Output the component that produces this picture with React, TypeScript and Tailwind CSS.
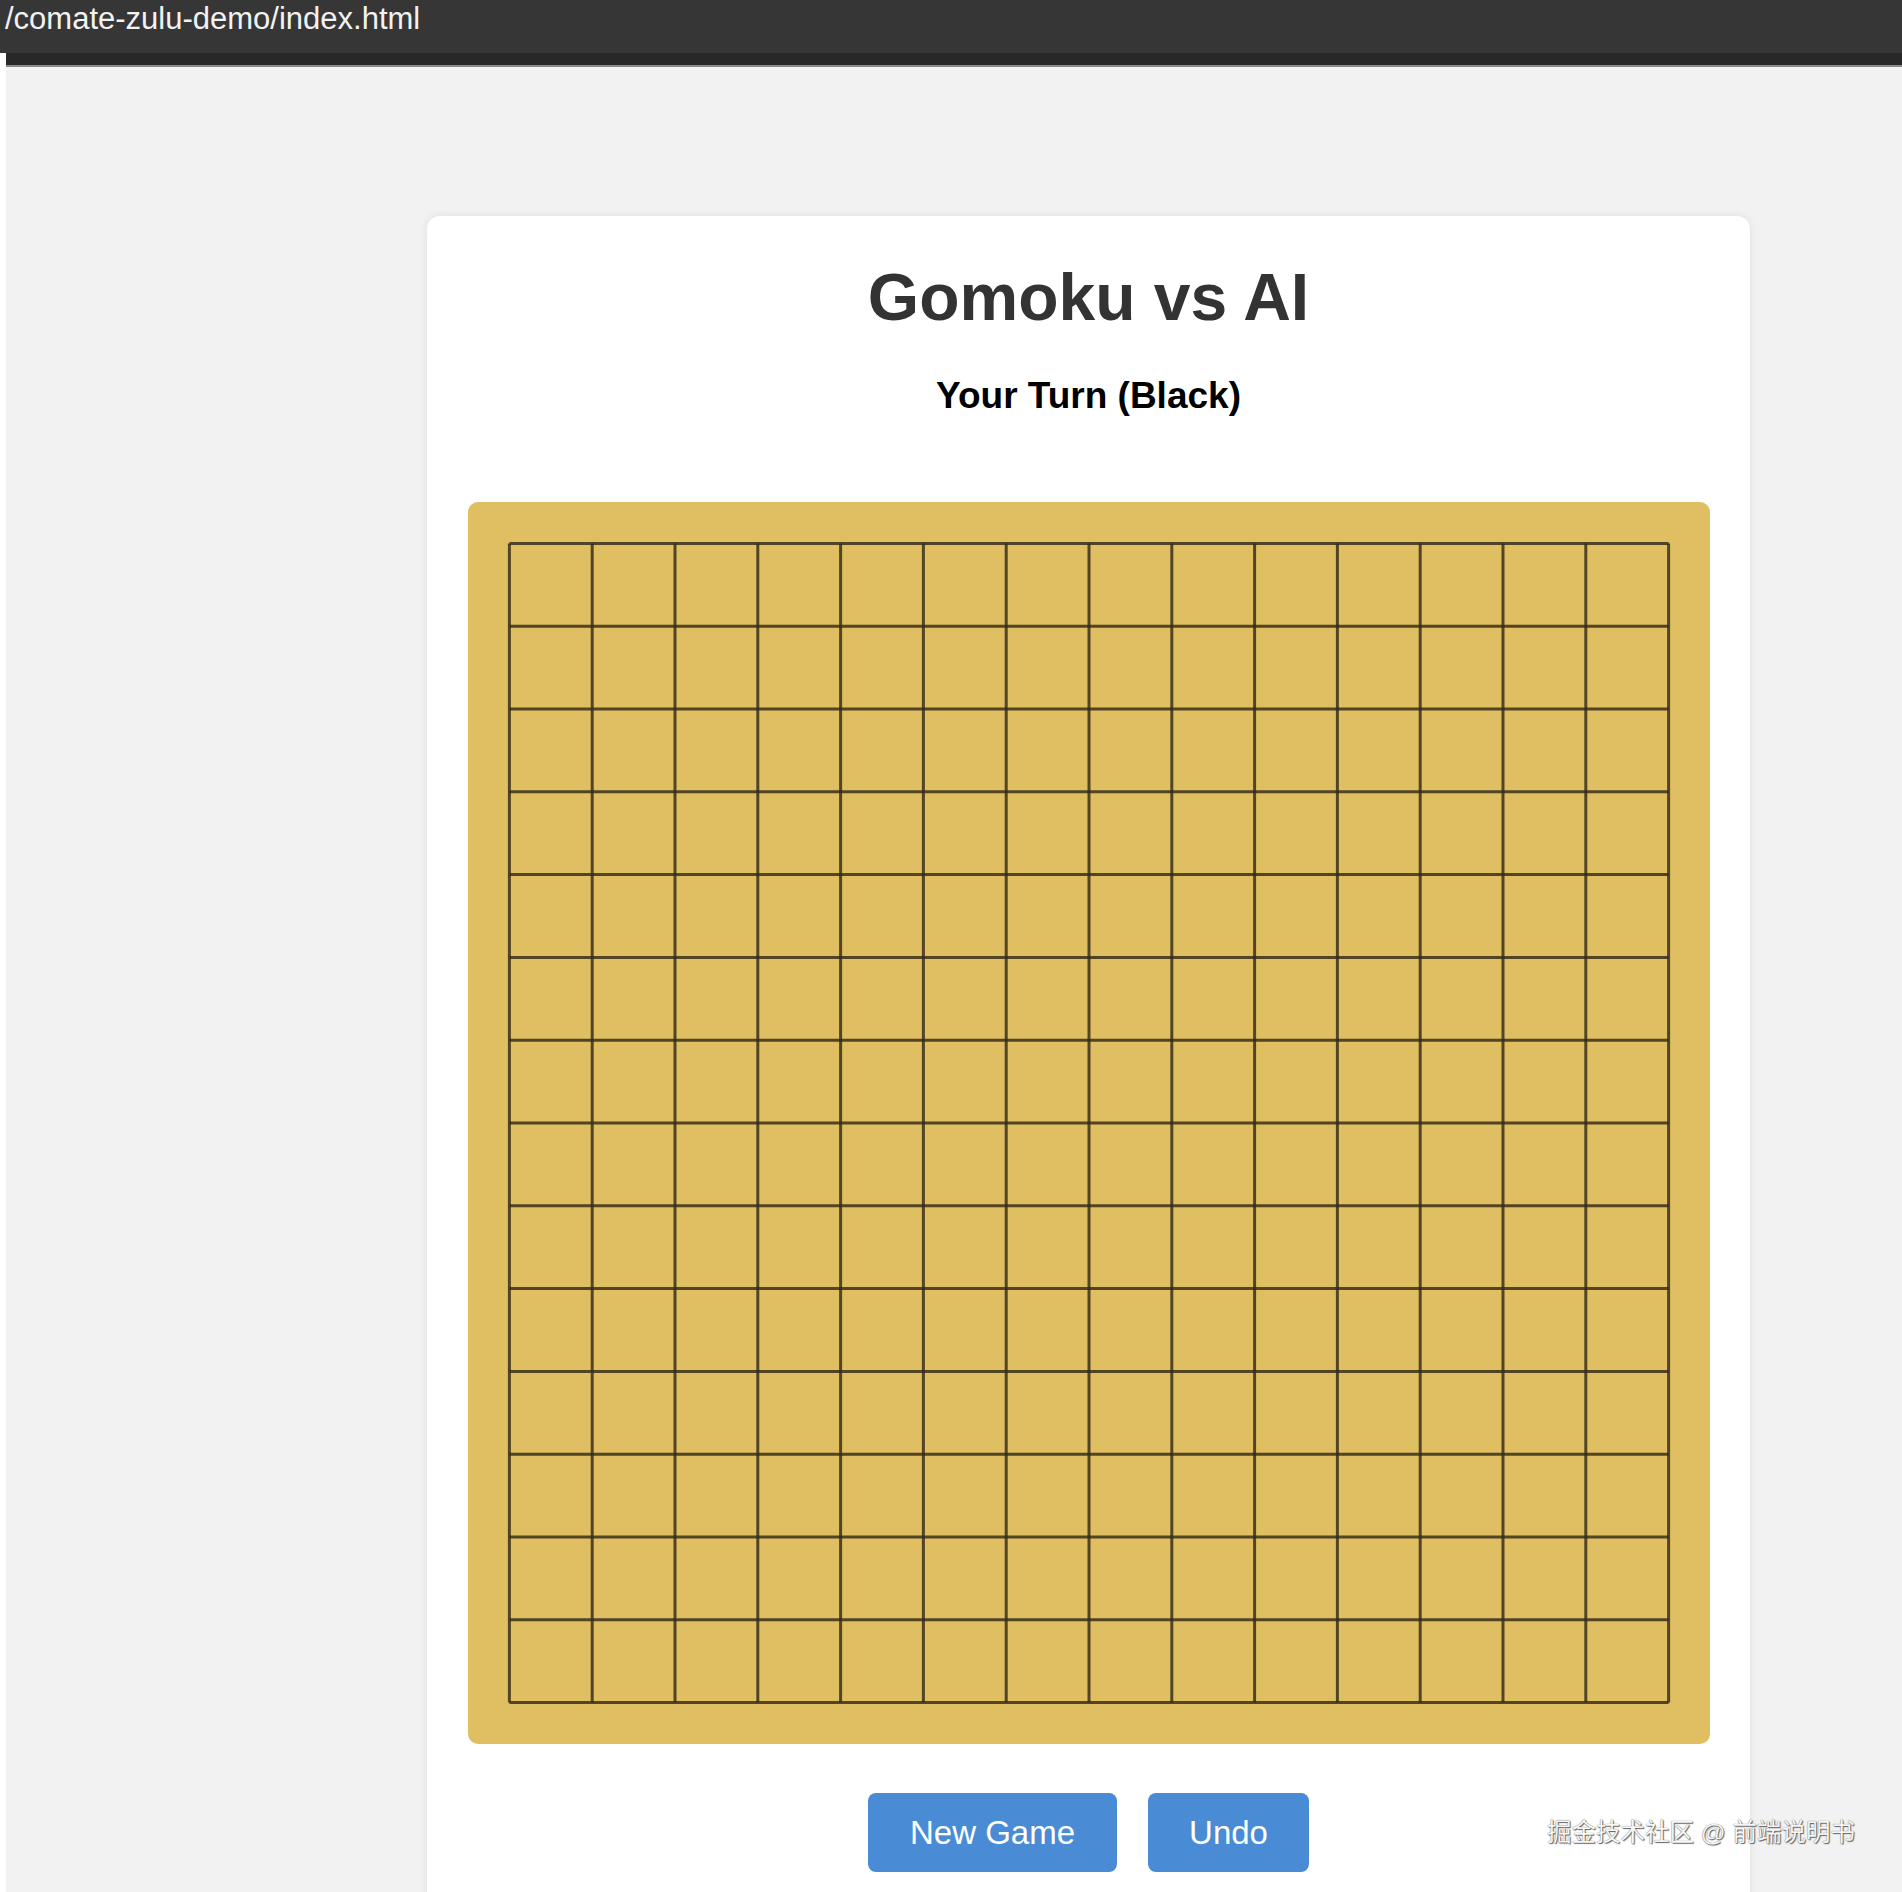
// App.tsx
import React from 'react';

const CELLS = 14;
const BOARD = 1242;
const CELL = BOARD / (CELLS + 1);
const PAD = CELL / 2;

const Board: React.FC = () => {
  const lines = Array.from({ length: CELLS + 1 }, (_, i) => PAD + i * CELL);
  return (
    <div className="w-[1242px] h-[1242px] rounded-[10px] bg-[#dfbf62]">
      <svg width={BOARD} height={BOARD} viewBox={`0 0 ${BOARD} ${BOARD}`}>
        {lines.map((p, i) => (
          <g key={i} stroke="#33291a" strokeWidth={3} strokeOpacity={0.82}>
            {/* 縦線 */}
            <line x1={p} y1={PAD} x2={p} y2={BOARD - PAD} />
            {/* 横線 */}
            <line x1={PAD} y1={p} x2={BOARD - PAD} y2={p} />
          </g>
        ))}
      </svg>
    </div>
  );
};

const App: React.FC = () => {
  return (
    <div className="relative h-[1892px] w-[1902px] overflow-hidden bg-[#f2f2f2] font-['Liberation_Sans',Arial,sans-serif]">
      {/* アドレスバー */}
      <div className="h-[53px] bg-[#363636] pl-[5px] text-[31px] leading-[37px] text-[#f2f2f2] whitespace-nowrap">
        /comate-zulu-demo/index.html
      </div>
      <div className="flex">
        <div className="w-[6px] bg-white" />
        <div className="flex-1">
          <div className="h-[12px] bg-[#282828]" />
          <div className="h-[2px] bg-[#8a8a8a]" />
        </div>
      </div>

      <div className="flex h-full">
        <div className="w-[6px] bg-white" />
        <div className="flex-1 pt-[149px] pl-[421px]">
          {/* カード */}
          <div className="flex w-[1323px] flex-col items-center rounded-[13px] bg-white pt-[43px] pb-[40px] shadow-[0_0_10px_rgba(0,0,0,0.08)]">
            <h1 className="text-[66px] font-bold leading-[76px] text-[#333333]">Gomoku vs AI</h1>
            <div className="mt-[40px] text-[37px] font-bold leading-[42px] text-black">Your Turn (Black)</div>
            <div className="mt-[85px]">
              <Board />
            </div>
            <div className="mt-[49px] flex gap-[31px]">
              <button className="h-[79px] w-[249px] rounded-[8px] bg-[#4a8bd6] text-[33px] leading-[38px] text-white">
                New Game
              </button>
              <button className="h-[79px] w-[161px] rounded-[8px] bg-[#4a8bd6] text-[33px] leading-[38px] text-white">
                Undo
              </button>
            </div>
          </div>
        </div>
      </div>

      {/* 透かし */}
      <div className="absolute left-[1547px] top-[1816px] whitespace-nowrap font-['Liberation_Sans','Noto_Sans_CJK_SC',sans-serif] text-[24.5px] leading-[34px] text-[#f7f7f7] [text-shadow:0_0_1px_#444,1px_1px_1px_#666]">
        掘金技术社区 @ 前端说明书
      </div>
    </div>
  );
};

export default App;
